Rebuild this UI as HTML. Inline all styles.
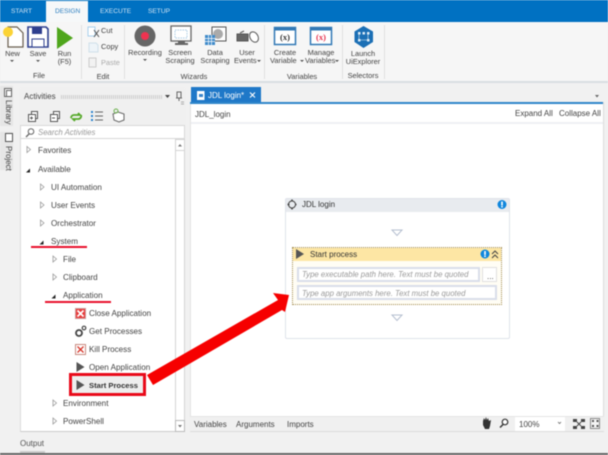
<!DOCTYPE html>
<html><head><meta charset="utf-8"><style>
*{box-sizing:border-box}
html,body{margin:0;padding:0}
body{width:608px;height:455px;overflow:hidden;background:#f1f1f1;position:relative;font-family:"Liberation Sans",sans-serif;font-size:7.4px;color:#444}
#w{position:absolute;left:0;top:0;width:608px;height:455px;filter:blur(.4px)}
.a{position:absolute}
.t{position:absolute;white-space:nowrap;line-height:10px}
.d{font-size:8px}
.c{text-align:center;transform:translateX(-50%)}
.r{position:absolute;white-space:nowrap;line-height:10px;font-size:8.1px;color:#444}
svg{position:absolute;overflow:visible}
</style></head><body><div id="w">
<div class="a" style="left:0;top:0;width:608px;height:22px;background:#0071c2"></div>
<div class="a" style="left:46px;top:1px;width:42px;height:22px;background:#f6f8f9"></div>
<div class="t" style="left:11px;top:7px;color:#cfe3f3;font-size:6.6px">START</div>
<div class="t" style="left:55px;top:7px;color:#2d7fc0;font-size:6.6px">DESIGN</div>
<div class="t" style="left:100px;top:7px;color:#cfe3f3;font-size:6.6px">EXECUTE</div>
<div class="t" style="left:148px;top:7px;color:#cfe3f3;font-size:6.6px">SETUP</div>
<div class="a" style="left:0;top:22px;width:608px;height:59px;background:#f6f6f6"></div>
<div class="a" style="left:0;top:81px;width:608px;height:2px;background:#d9dee2"></div>
<div class="a" style="left:81px;top:25px;width:1px;height:54px;background:#e0e0e0"></div>
<div class="a" style="left:124px;top:25px;width:1px;height:54px;background:#e0e0e0"></div>
<div class="a" style="left:264px;top:25px;width:1px;height:54px;background:#e0e0e0"></div>
<div class="a" style="left:342px;top:25px;width:1px;height:54px;background:#e0e0e0"></div>
<div class="a" style="left:384px;top:25px;width:1px;height:54px;background:#e0e0e0"></div>

<svg style="left:0;top:0" width="608" height="82">
<path d="M8 27H17L23 33V47H8Z" fill="#fff" stroke="#6a5f4f" stroke-width="1.2"/>
<circle cx="8" cy="32" r="5" fill="#fbd335"/>
<path d="M28 27H46L48 29V47H28Z" fill="#fff" stroke="#2e3f8e" stroke-width="1.6"/>
<rect x="32" y="27" width="10" height="7" fill="#2e3f8e"/><rect x="32" y="39" width="12" height="8" fill="#fff" stroke="#2e3f8e"/>
<path d="M57 27L73 38L57 49Z" fill="#4fa61c"/>
<path d="M88 27H95V36H88Z" fill="#fff" stroke="#a9d0ec"/><path d="M94 30L99 37M99 30L94 37" stroke="#555"/>
<path d="M89 43H96L98 45V52H89Z" fill="#eef4f8" stroke="#cfe0ea"/>
<path d="M89 58H96V67H89Z" fill="#f2f2f2" stroke="#ccc"/>
<circle cx="145" cy="36" r="10.5" fill="#666"/><circle cx="145" cy="36" r="4" fill="#ee3350"/>
<rect x="171" y="26" width="20" height="15" fill="#fff" stroke="#666" stroke-width="1.3"/><rect x="175" y="30" width="12" height="8" fill="none" stroke="#a9cbe4" stroke-dasharray="1.5 1"/><path d="M178 41h7v2h3v2h-13v-2h3z" fill="#666"/>
<rect x="212" y="27" width="14" height="14" fill="#fff" stroke="#555"/><circle cx="218" cy="34" r="5" fill="#aaa"/>
<rect x="205" y="35" width="10" height="10" fill="#3f8ac9"/><path d="M205 38.500h10M205 41.500h10M208.500 35v10M211.500 35v10" stroke="#fff" stroke-width=".7"/>
<rect x="237" y="34" width="11" height="7" fill="#666" stroke="#555"/><ellipse cx="254" cy="37" rx="4" ry="5.500" fill="#fff" stroke="#555" transform="rotate(-30 254 37)"/><path d="M240 33l4-2" stroke="#555"/>
<rect x="274.500" y="27.500" width="21" height="17" fill="#fff" stroke="#3178b5" stroke-width="1.500"/><rect x="274" y="27" width="22" height="3.500" fill="#3178b5"/>
<rect x="310.500" y="27.500" width="21" height="17" fill="#fff" stroke="#3178b5" stroke-width="1.500"/><rect x="310" y="27" width="22" height="3.500" fill="#3178b5"/>
<path d="M363.500 26L373 31.500V42L363.500 48L354.500 42V31.500Z" fill="#1b6fb5"/><g fill="#dcebf6"><rect x="358" y="32" width="2.500" height="2.500"/><rect x="362.500" y="32" width="2.500" height="2.500"/><rect x="367" y="32" width="2.500" height="2.500"/><rect x="358" y="39" width="2.500" height="2.500"/><rect x="367" y="39" width="2.500" height="2.500"/></g><path d="M360 40h8M359 34v6M368 34v6" stroke="#dcebf6" stroke-width=".6"/>
<g fill="#555"><path d="M10 60h4l-2 2zM36 60h4l-2 2zM143 59h4l-2 2zM257 60h4l-2 2zM300 60h4l-2 2zM335 60h4l-2 2z"/></g>
</svg>
<div class="t c" style="left:285px;top:32px;font:bold 8.500px 'Liberation Serif',serif;color:#333">(x)</div>
<div class="t c" style="left:321px;top:32px;font:bold 8.500px 'Liberation Serif',serif;color:#e8304c">(x)</div>

<div class="t c" style="left:12.500px;top:49px">New</div>
<div class="t c" style="left:38px;top:49px">Save</div>
<div class="t c" style="left:64.500px;top:49px">Run</div>
<div class="t c" style="left:64.500px;top:57px">(F5)</div>
<div class="t c" style="left:39px;top:71px">File</div>
<div class="t" style="left:101px;top:26px">Cut</div>
<div class="t" style="left:101px;top:42px">Copy</div>
<div class="t" style="left:101px;top:58px;color:#aaa">Paste</div>
<div class="t c" style="left:103px;top:72px">Edit</div>
<div class="t c" style="left:145px;top:48px">Recording</div>
<div class="t c" style="left:180px;top:48px">Screen</div>
<div class="t c" style="left:180px;top:56px">Scraping</div>
<div class="t c" style="left:215px;top:48px">Data</div>
<div class="t c" style="left:215px;top:56px">Scraping</div>
<div class="t c" style="left:247px;top:48px">User</div>
<div class="t" style="left:234px;top:56px">Events</div>
<div class="t c" style="left:194px;top:72px">Wizards</div>
<div class="t c" style="left:285px;top:48px">Create</div>
<div class="t" style="left:270px;top:56px">Variable</div>
<div class="t c" style="left:321px;top:48px">Manage</div>
<div class="t" style="left:305px;top:56px">Variables</div>
<div class="t c" style="left:302px;top:72px">Variables</div>
<div class="t c" style="left:363px;top:49px">Launch</div>
<div class="t c" style="left:363px;top:57px">UiExplorer</div>
<div class="t c" style="left:363px;top:71px">Selectors</div>

<!-- left tabs -->
<div class="a" style="left:0;top:86px;width:13px;height:40px;background:#e6e6e6"></div>
<div class="a" style="left:0;top:132px;width:13px;height:38px;background:#e6e6e6"></div>
<svg style="left:0;top:0" width="20" height="180"><rect x="4.500" y="88.500" width="7" height="8" fill="#fff" stroke="#666"/><rect x="6.500" y="90.500" width="5" height="6" fill="#fff" stroke="#666"/><rect x="5.500" y="133.500" width="7" height="8" fill="#fff" stroke="#555"/></svg>
<div class="t d" style="left:3px;top:100px;transform-origin:0 0;transform:translate(10px,0) rotate(90deg)">Library</div>
<div class="t d" style="left:3px;top:146px;transform-origin:0 0;transform:translate(10px,0) rotate(90deg)">Project</div>

<!-- activities -->
<div class="a" style="left:20px;top:88px;width:165px;height:38px;background:#f0f0f0"></div>
<div class="t d" style="left:24px;top:92px">Activities</div>
<div class="a" style="left:61px;top:95px;width:102px;height:4px;background:repeating-linear-gradient(90deg,#ccc 0 1px,#f0f0f0 1px 2px)"></div>
<svg style="left:0;top:85px" width="190" height="50">
<path d="M165 10h5l-2.500 3z" fill="#444"/><path d="M177 7h4v6h-4zM179 13v3M176 13h6" fill="none" stroke="#666"/>
<g fill="#fff" stroke="#555"><rect x="31.500" y="26.500" width="6" height="7"/><rect x="28.500" y="29.500" width="7" height="7"/><rect x="53.500" y="26.500" width="6" height="7"/><rect x="50.500" y="29.500" width="7" height="7"/></g>
<path d="M30 33h3M31.500 31.500v3M52 33h3" stroke="#555"/>
<path d="M71 33a3 3 0 0 1 3-3h6l-2-2M81 30a3 3 0 0 1-3 4h-5l2 2" fill="none" stroke="#56a92a" stroke-width="1.800"/>
<path d="M92 26v2M92 30v2M92 34v2" stroke="#2a83cc" stroke-width="2"/><path d="M95 27h8M95 31h8M95 35h8" stroke="#666"/>
<path d="M113 29l5-2 6 2v6l-5 2-5-2z" fill="#fff" stroke="#666"/><circle cx="116" cy="26" r="2" fill="none" stroke="#6ab04c"/>
<path d="M181 17h3M181 19h3" stroke="#aaa"/>
</svg>
<div class="a" style="left:20px;top:125px;width:165px;height:14px;background:#fff;border:1px solid #d8d8d8"></div>
<svg style="left:0;top:0" width="40" height="145"><circle cx="31" cy="131.500" r="2.800" fill="none" stroke="#666"/><path d="M29 134l-3 3" stroke="#666" stroke-width="1.300"/></svg>
<div class="t" style="left:38px;top:128px;font-style:italic;color:#999;font-size:7.800px">Search Activities</div>
<div class="a" style="left:20px;top:139px;width:155px;height:293px;background:#fff;border-left:1px solid #dcdcdc;border-bottom:1px solid #ccc"></div>
<div class="a" style="left:175px;top:139px;width:10px;height:293px;background:#fff;border:1px solid #d4d4d4"></div>
<div class="a" style="left:175px;top:139px;width:10px;height:12px;background:#fff;border:1px solid #d4d4d4"></div>
<div class="a" style="left:175px;top:420px;width:10px;height:12px;background:#fff;border:1px solid #bbb"></div>
<div class="a" style="left:71px;top:376px;width:73px;height:18px;background:#eee"></div>
<svg style="left:0;top:0" width="190" height="440">
<path d="M178 146.500h4l-2-2.500zM178 425h4l-2 2.500z" fill="#777"/>
<g fill="#fff" stroke="#999" stroke-width=".8"><path d="M27 146.500l3.500 3-3.500 3zM40.500 184l3.500 3-3.500 3zM40.500 202l3.500 3-3.500 3zM40.500 220l3.500 3-3.500 3zM53 256l3.500 3-3.500 3zM53 274l3.500 3-3.500 3zM53 400l3.500 3-3.500 3zM53 418l3.500 3-3.500 3z"/></g>
<g fill="#222"><path d="M26 172.500h4v-4zM39.500 244.500h4v-4zM51.500 298.500h4v-4z"/></g>
<rect x="75.500" y="308.500" width="10" height="10" fill="#e83a3a" stroke="#c99"/><path d="M77.500 310.500l6 6M83.500 310.500l-6 6" stroke="#fff" stroke-width="1.800"/>
<circle cx="79" cy="333" r="3" fill="none" stroke="#444" stroke-width="1.800"/><circle cx="84" cy="328" r="1.800" fill="none" stroke="#444" stroke-width="1.200"/>
<rect x="75.500" y="344.500" width="10" height="10" fill="#fff" stroke="#c98b80"/><path d="M77.500 346.500l6 6M83.500 346.500l-6 6" stroke="#d8362a" stroke-width="1.300"/>
<path d="M76.500 362l8 5-8 5zM76.500 380l8 5-8 5z" fill="#555"/>
</svg>
<div class="r" style="left:38px;top:146px">Favorites</div>
<div class="r" style="left:38px;top:165px">Available</div>
<div class="r" style="left:51px;top:183px">UI Automation</div>
<div class="r" style="left:51px;top:201px">User Events</div>
<div class="r" style="left:51px;top:219px">Orchestrator</div>
<div class="r" style="left:51px;top:237px">System</div>
<div class="r" style="left:63px;top:255px">File</div>
<div class="r" style="left:63px;top:273px">Clipboard</div>
<div class="r" style="left:63px;top:291px">Application</div>
<div class="r" style="left:89px;top:309px">Close Application</div>
<div class="r" style="left:89px;top:327px">Get Processes</div>
<div class="r" style="left:89px;top:345px">Kill Process</div>
<div class="r" style="left:89px;top:363px">Open Application</div>
<div class="r" style="left:89px;top:381px;font-weight:bold;color:#333;font-size:7.600px">Start Process</div>
<div class="r" style="left:63px;top:399px">Environment</div>
<div class="r" style="left:63px;top:417px">PowerShell</div>
<div class="a" style="left:31px;top:246px;width:56px;height:1.500px;background:#e8112d"></div>
<div class="a" style="left:45px;top:301px;width:66px;height:1.500px;background:#e8112d"></div>

<!-- doc -->
<div class="a" style="left:191px;top:87px;width:70px;height:16px;background:#1f78c8"></div>
<svg style="left:0;top:0" width="270" height="104"><rect x="197" y="91" width="7.500" height="9" fill="#fff"/><rect x="199" y="94" width="4" height="3" fill="#3a86cc"/><path d="M250 92.500l5 5M255 92.500l-5 5" stroke="#fff" stroke-width="1.100"/></svg>
<div class="t d" style="left:208px;top:91px;color:#fff">JDL login*</div>
<div class="a" style="left:190px;top:102px;width:414px;height:2px;background:#2f86ca"></div>
<div class="a" style="left:190px;top:104px;width:414px;height:312px;background:#fff"></div>
<div class="a" style="left:190px;top:122px;width:414px;height:2px;background:#eff0f4"></div>
<div class="t d" style="left:195px;top:110px">JDL_login</div>
<div class="t d" style="left:515px;top:109px">Expand All</div>
<div class="t d" style="left:559px;top:109px">Collapse All</div>
<svg style="left:0;top:0" width="608" height="100"><path d="M595 95h4l-2 2.500z" fill="#666"/></svg>
<div class="a" style="left:603px;top:102px;width:1px;height:330px;background:#ddd"></div>
<div class="a" style="left:190px;top:104px;width:1px;height:328px;background:#e4e4e4"></div>

<div class="a" style="left:190px;top:416px;width:414px;height:16px;background:#f0f0f0;border-top:1px solid #e4e4e4;border-bottom:1px solid #dcdcdc"></div>
<div class="t d" style="left:194px;top:420px">Variables</div>
<div class="t d" style="left:236px;top:420px">Arguments</div>
<div class="t d" style="left:287px;top:420px">Imports</div>
<div class="a" style="left:515px;top:417px;width:50px;height:14px;background:#fff"></div>
<div class="t d" style="left:519px;top:420px">100%</div>
<svg style="left:0;top:410px" width="608" height="30">
<path d="M483 11l1-3 1 2 1-3 1 3 1-2 1 3 2-1-1 6-1 3h-4l-2-4z" fill="#333"/>
<circle cx="505" cy="12" r="2.800" fill="#fff" stroke="#333" stroke-width="1.200"/><path d="M503 14.500l-3 3" stroke="#333" stroke-width="1.500"/>
<path d="M558 12l1.500 1.500 1.500-1.500" fill="none" stroke="#666" stroke-width=".8"/>
<g fill="#444"><rect x="573" y="9" width="4" height="3"/><rect x="581" y="9" width="4" height="3"/><rect x="573" y="16" width="4" height="3"/><rect x="581" y="16" width="4" height="3"/></g><path d="M577 12l4 4M581 12l-4 4" stroke="#444"/>
<rect x="590.500" y="8.500" width="9" height="10" fill="#f4f4f4" stroke="#888"/><g fill="#555"><rect x="592" y="10" width="2" height="2"/><rect x="596.500" y="10" width="2" height="2"/><rect x="592" y="15" width="2" height="2"/><rect x="596.500" y="15" width="2" height="2"/></g>
</svg>

<!-- sequence -->
<div class="a" style="left:285px;top:198px;width:225px;height:141px;background:#fff;border:1px solid #dfe3ea;border-radius:2px"></div>
<div class="a" style="left:286px;top:199px;width:223px;height:13px;background:#e8ebef"></div>
<svg style="left:0;top:0" width="608" height="330">
<circle cx="292" cy="204.500" r="3.500" fill="none" stroke="#444"/><path d="M292 199.500v10M287.500 204.500h9" stroke="#444" stroke-width="1.500" stroke-dasharray="2 6"/>
<circle cx="502" cy="204.500" r="4.500" fill="#0f86dd"/><rect x="501.200" y="201.500" width="1.600" height="4" fill="#fff"/><rect x="501.200" y="206" width="1.600" height="1.500" fill="#fff"/>
<path d="M392 230h10l-5 5.500z" fill="#fff" stroke="#b5bfd0"/><path d="M392 315h10l-5 5.500z" fill="#fff" stroke="#b5bfd0"/>
</svg>
<div class="t d" style="left:302px;top:200px;color:#333">JDL login</div>
<div class="a" style="left:292px;top:247px;width:210px;height:58px;background:#fffdf4;border:1px dotted #a08a50"></div>
<div class="a" style="left:293px;top:248px;width:208px;height:13px;background:#fde6a4"></div>
<svg style="left:0;top:0" width="608" height="330">
<path d="M296 249l8 5-8 5z" fill="#555"/>
<circle cx="485" cy="254" r="4.500" fill="#0f86dd"/><rect x="484.200" y="251" width="1.600" height="4" fill="#fff"/><rect x="484.200" y="255.500" width="1.600" height="1.500" fill="#fff"/>
<path d="M492 254l3-3 3 3M492 258l3-3 3 3" fill="none" stroke="#444"/>
</svg>
<div class="t d" style="left:310px;top:250px;color:#333">Start process</div>
<div class="a" style="left:297px;top:267px;width:183px;height:15px;background:#fff;border:2px solid #d9deea"></div>
<div class="a" style="left:482px;top:267px;width:15px;height:15px;background:#fff;border:1px solid #e0e0e0"></div>
<div class="t" style="left:487px;top:272px;font-size:8px">...</div>
<div class="a" style="left:297px;top:285px;width:200px;height:15px;background:#fff;border:2px solid #d9deea"></div>
<div class="t" style="left:302px;top:270px;font-style:italic;color:#9a9a9a;font-size:7.800px">Type executable path here. Text must be quoted</div>
<div class="t" style="left:302px;top:289px;font-style:italic;color:#9a9a9a;font-size:7.800px">Type app arguments here. Text must be quoted</div>

<!-- annotations -->
<div class="a" style="left:69px;top:373px;width:77px;height:23px;border:3px solid #e90a1a"></div>
<svg style="left:0;top:0" width="608" height="455"><polygon points="147,375 278,300 273,293 289,295 285,312 282,310 153,385" fill="#f60000"/></svg>

<div class="t d" style="left:20px;top:439px;color:#555">Output</div>
<div class="a" style="left:20px;top:451px;width:25px;height:2px;background:#ccc"></div>
<div class="a" style="left:0;top:453px;width:608px;height:2px;background:#666"></div>
</div></body></html>
